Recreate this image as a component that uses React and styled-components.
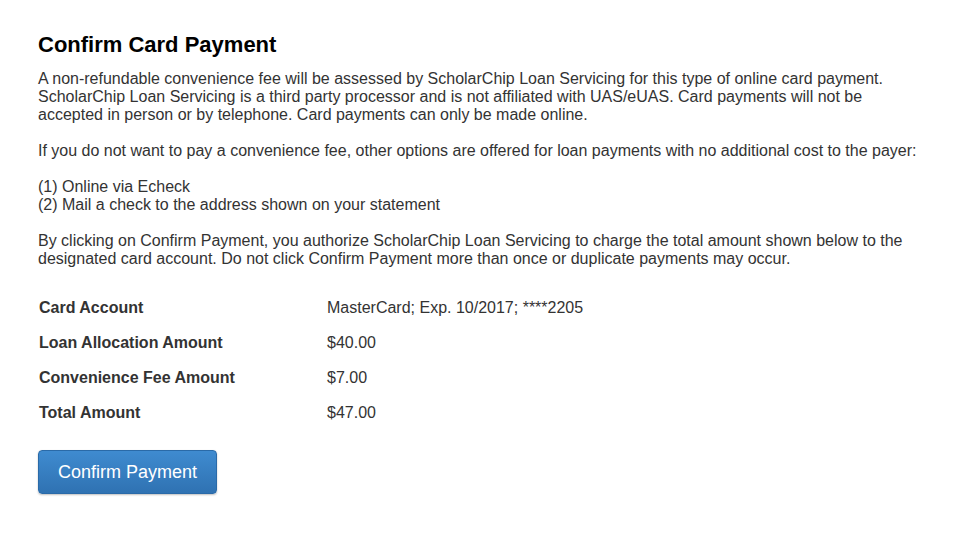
import React from "react";
import styled, { createGlobalStyle } from "styled-components";

const Global = createGlobalStyle`
  html, body { margin: 0; padding: 0; background: #fff; }
  body { font-family: "Liberation Sans", Arial, sans-serif; }
`;

const Page = styled.main`
  padding: 33px 38px 40px 38px;
  color: #333;
  font-size: 16px;
  line-height: 18px;
`;

const Title = styled.h1`
  margin: 0 0 13px;
  font-size: 22px;
  line-height: 24px;
  font-weight: bold;
  color: #000;
`;

const Para = styled.p`
  margin: 0 0 18px;
`;

const Details = styled.div`
  display: grid;
  grid-template-columns: 288px 1fr;
  grid-auto-rows: 35px;
  align-items: center;
  margin-top: 22px;
  padding-left: 1px;
`;

const Label = styled.div`
  font-weight: bold;
`;

const Value = styled.div``;

const Button = styled.button`
  margin-top: 20px;
  width: 179px;
  height: 44px;
  border: 1px solid #2a6aa8;
  border-radius: 4px;
  background: linear-gradient(#3f8bd0, #2f72b2);
  color: #fff;
  font-family: "Liberation Sans", Arial, sans-serif;
  font-size: 18px;
  box-shadow: 0 1px 2px rgba(0,0,0,0.25);
  cursor: pointer;
`;

const rows = [
  ["Card Account", "MasterCard; Exp. 10/2017; ****2205"],
  ["Loan Allocation Amount", "$40.00"],
  ["Convenience Fee Amount", "$7.00"],
  ["Total Amount", "$47.00"],
];

export default function App() {
  return (
    <>
      <Global />
      <Page>
        <Title>Confirm Card Payment</Title>
        <Para>
          A non-refundable convenience fee will be assessed by ScholarChip Loan Servicing for this type of online card payment.
          <br />
          ScholarChip Loan Servicing is a third party processor and is not affiliated with UAS/eUAS. Card payments will not be
          <br />
          accepted in person or by telephone. Card payments can only be made online.
        </Para>
        <Para>
          If you do not want to pay a convenience fee, other options are offered for loan payments with no additional cost to the payer:
        </Para>
        <Para>
          (1) Online via Echeck
          <br />
          (2) Mail a check to the address shown on your statement
        </Para>
        <Para>
          By clicking on Confirm Payment, you authorize ScholarChip Loan Servicing to charge the total amount shown below to the
          <br />
          designated card account. Do not click Confirm Payment more than once or duplicate payments may occur.
        </Para>
        <Details>
          {rows.map(([l, v]) => (
            <React.Fragment key={l}>
              <Label>{l}</Label>
              <Value>{v}</Value>
            </React.Fragment>
          ))}
        </Details>
        <Button>Confirm Payment</Button>
      </Page>
    </>
  );
}
